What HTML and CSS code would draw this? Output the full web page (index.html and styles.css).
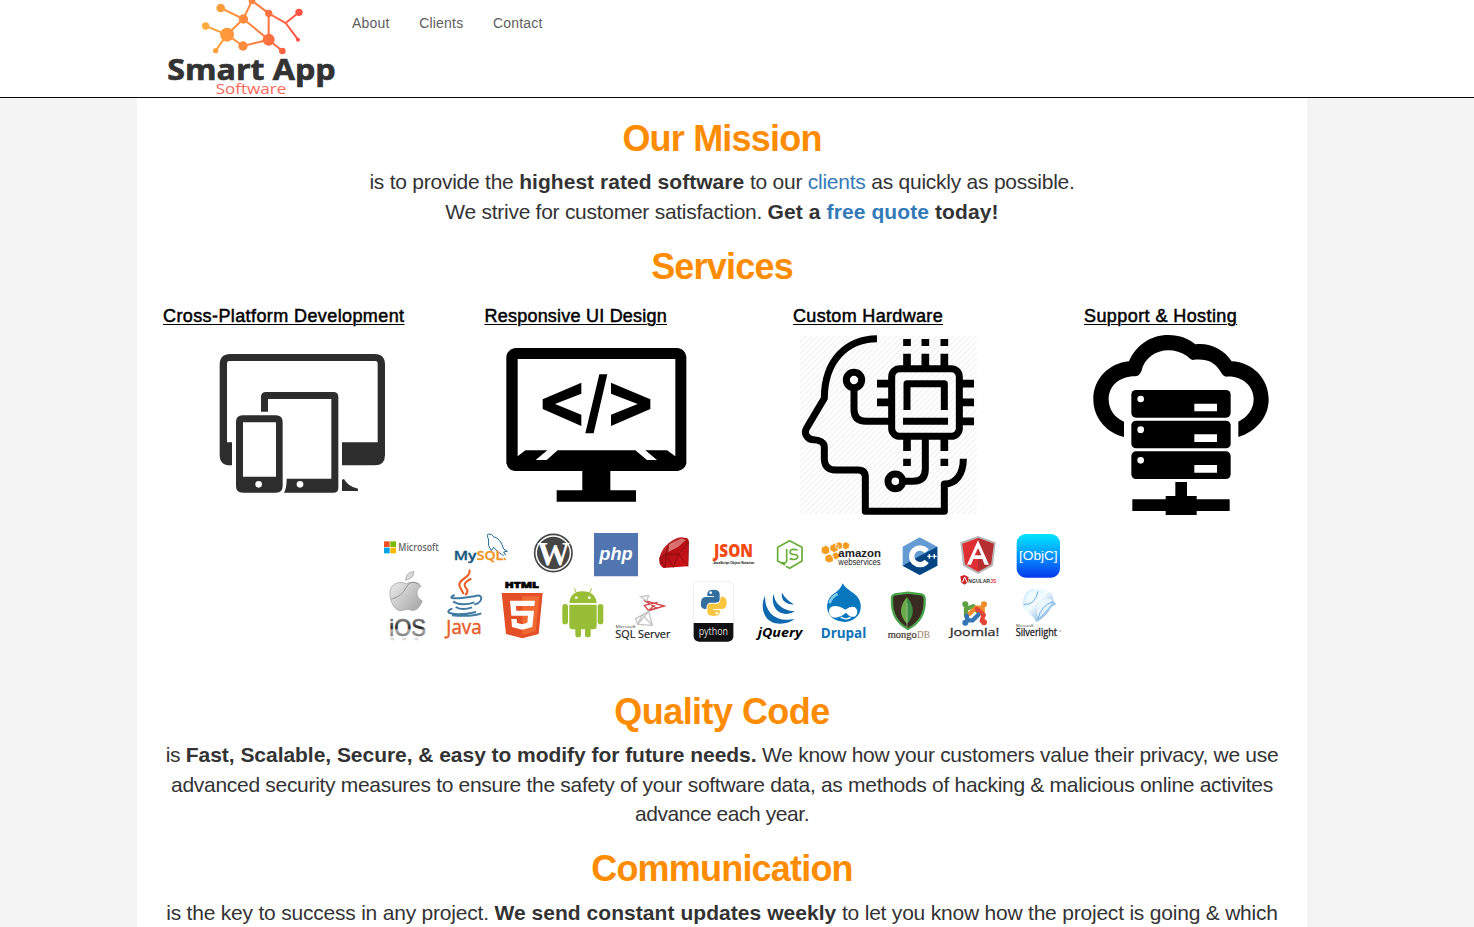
FILE: index.html
```html
<!DOCTYPE html>
<html lang="en">
<head>
<meta charset="utf-8">
<title>Smart App Software</title>
<link rel="stylesheet" href="styles.css">
</head>
<body>
<header class="navbar">
  <div class="navbar-inner">
    <svg class="brand" viewBox="105 0 525 291" role="img" aria-label="Smart App Software">
      <defs><linearGradient id="net" gradientUnits="userSpaceOnUse" x1="215" y1="0" x2="520" y2="0"><stop offset="0" stop-color="#ffae3b"/><stop offset=".5" stop-color="#ff823e"/><stop offset="1" stop-color="#ff4d46"/></linearGradient></defs>
      <g fill="none" stroke="url(#net)" stroke-width="6">
        <path d="M272 24L340 57L366 2L416 40L467 69L507 37M467 69L504 119M416 40V119L457 153M340 57L416 119L339 138L291 104L340 57M227 78L291 104L257 152"/>
      </g>
      <g fill="url(#net)"><circle cx="272" cy="24" r="13"/><circle cx="340" cy="57" r="14"/><circle cx="366" cy="2" r="10"/><circle cx="416" cy="40" r="11"/><circle cx="507" cy="37" r="11"/><circle cx="504" cy="119" r="6"/><circle cx="416" cy="119" r="18"/><circle cx="457" cy="153" r="10"/><circle cx="339" cy="138" r="14"/><circle cx="291" cy="104" r="21"/><circle cx="227" cy="78" r="11"/><circle cx="257" cy="152" r="8"/></g>
      <text class="brand-name" x="112" y="239" textLength="505" lengthAdjust="spacingAndGlyphs">Smart App</text>
      <text class="brand-sub" x="257" y="283" textLength="212" lengthAdjust="spacingAndGlyphs">Software</text>
    </svg>
    <nav class="links"><a>About</a><a>Clients</a><a>Contact</a></nav>
  </div>
</header>
<main class="container">
  <h1 class="title t-mission">Our Mission</h1>
  <p class="lead"><span class="l1">is to provide the <b>highest rated software</b> to our <a>clients</a> as quickly as possible.</span><br><span class="l2">We strive for customer satisfaction. <b>Get a <a>free quote</a> today!</b></span></p>
  <h1 class="title t-services">Services</h1>
  <section class="services">
    <div class="service"><h4 class="s1">Cross-Platform Development</h4>
      <svg class="pic" viewBox="69 90 690 570">
        <path fill="#2d2d2d" fill-rule="evenodd" d="M271 162H704Q735 162 735 194V465Q735 496 704 496H606V427H713V190Q713 183 706 183H268Q261 183 261 190V427H276V496H271Q239 496 239 465V194Q239 162 271 162Z"/>
        <path fill="#2d2d2d" d="M363 335V291Q363 276 378 276H580Q595 276 595 291V563Q595 578 580 578H432Q440 565 440 536H574V297H384V335Z"/>
        <path fill="#2d2d2d" fill-rule="evenodd" d="M308 346H408Q428 346 428 366V558Q428 578 408 578H308Q288 578 288 558V366Q288 346 308 346ZM309 367V530H408V367Z"/>
        <path fill="#2d2d2d" d="M606 539L612 537Q624 560 654 566V573H606Z"/><circle cx="356" cy="553" r="10" fill="#fff"/><circle cx="480" cy="553" r="10" fill="#fff"/>
      </svg></div>
    <div class="service"><h4 class="s2">Responsive UI Design</h4>
      <svg class="pic" viewBox="44 90 690 570">
        <path fill-rule="evenodd" d="M133 144H623Q644 148 648 169V490Q645 508 623 513H420V571H497V605H259V571H336V513H133Q113 510 108 490V169Q112 148 133 144ZM142 177V469L165 451H231L196 480H229L262 451H495L530 480H560L525 451H590L615 469V177Z"/>
        <path d="M333 248V281L254 312L333 344V378L217 327V298ZM422 248V281L502 312L422 344V378L540 327V298ZM387 223H411L370 400H345Z"/>
      </svg></div>
    <div class="service"><h4 class="s3">Custom Hardware</h4>
      <svg class="pic" viewBox="39 90 690 570">
        <defs><pattern id="hatch" width="17" height="17" patternUnits="userSpaceOnUse"><path d="M-2 19L19 -2" stroke="#e4e4e4" stroke-width="2.5"/></pattern></defs>
        <path fill="url(#hatch)" d="M60 108H590V642H60Z"/>
        <g fill="none" stroke="#000" stroke-width="21">
          <path d="M291 116C199 117 133 183 133 295L80 384C70 400 82 419 101 419C118 419 133 428 133 440V480Q136 510 166 510H234Q256 510 256 532V634H493V552C528 552 550 522 550 476" stroke-linejoin="round"/>
          <rect x="335" y="206" width="203" height="203" rx="24"/>
          <circle cx="222" cy="240" r="23"/><circle cx="346" cy="544" r="22"/>
          <path d="M222 264V328Q222 364 258 364H335M436 409V507Q436 544 399 544H370"/>
          <path d="M381 330V251H493V330" stroke-linejoin="round"/><path d="M369 364H504"/>
          <path d="M381 117V138M436 117V138M493 117V138M381 161V206M436 161V206M493 161V206M291 251H335M291 307H335M538 251H582M538 307H582M538 364H582M381 409V453M493 409V453M381 476V498M493 476V498" stroke-width="23"/>
        </g>
      </svg></div>
    <div class="service"><h4 class="s4">Support &amp; Hosting</h4>
      <svg class="pic" viewBox="42 90 690 570">
        <path d="M162 411C105 397 70 350 70 297C70 237 117 189 177 184C197 136 242 105 295 105C330 105 356 116 376 133C423 128 461 149 485 184C548 187 596 236 596 298C596 350 561 394 505 411V365C532 353 551 327 551 298C551 256 514 226 468 230Q458 228 451 214C433 185 408 175 368 180Q360 178 352 169C299 133 228 153 214 214Q208 229 195 229C148 229 116 258 116 298C116 329 135 354 162 365Z"/>
        <rect x="184" y="270" width="298" height="83" rx="14"/><rect x="184" y="362" width="298" height="83" rx="14"/><rect x="184" y="454" width="298" height="83" rx="14"/>
        <path d="M316 546H351V588H380V598H479V633H380V645H287V633H187V598H287V588H316Z"/>
        <g fill="#fff"><circle cx="212" cy="297" r="10"/><circle cx="212" cy="389" r="10"/><circle cx="212" cy="481" r="10"/><path d="M373 311H441V334H373ZM373 403H441V426H373ZM373 495H441V518H373Z"/></g>
      </svg></div>
  </section>
  <svg class="tech" viewBox="0 0 2100 375">
    <defs>
      <linearGradient id="obj" x2="0" y2="1"><stop stop-color="#00e6ff"/><stop offset=".5" stop-color="#0793fc"/><stop offset="1" stop-color="#0638ef"/></linearGradient>
      <linearGradient id="silver" x2="1" y2="1"><stop stop-color="#f8f8f8"/><stop offset="1" stop-color="#a2a2a2"/></linearGradient>
      <linearGradient id="ios" x2="0" y2="1"><stop offset=".1" stop-color="#999"/><stop offset=".52" stop-color="#222"/><stop offset=".6" stop-color="#aaa"/><stop offset="1" stop-color="#555"/></linearGradient>
      <linearGradient id="ruby" x2="1" y2="1"><stop stop-color="#e9625d"/><stop offset=".4" stop-color="#b10f14"/><stop offset="1" stop-color="#d5151a"/></linearGradient>
      <linearGradient id="glow" x2="1" y2="1"><stop stop-color="#bde6fb"/><stop offset=".4" stop-color="#f5fcff"/><stop offset="1" stop-color="#4b91d6"/></linearGradient>
    </defs>
    <g>
      <path fill="#f05022" d="M27 49h17v17H27z"/><path fill="#7eb900" d="M46 49h17v17H46z"/><path fill="#00a3ee" d="M27 68h17v17H27z"/><path fill="#fdb800" d="M46 68h17v17H46z"/>
      <text class="open semi" x="70" y="78" font-size="30" fill="#666" textLength="121" lengthAdjust="spacingAndGlyphs">Microsoft</text>
      <g fill="none" stroke="#1d6b91" stroke-width="3"><path d="M349 77Q336 62 341 45Q334 27 340 27Q350 26 357 36Q376 39 386 72L397 79L386 81L392 91M349 77L356 67Q367 82 386 92"/></g>
      <text class="open semi" x="236" y="104" font-size="36" fill="#15577f" stroke="#15577f" textLength="68" lengthAdjust="spacingAndGlyphs">My</text><text class="open semi" x="305" y="104" font-size="36" fill="#f29221" stroke="#f29221" textLength="91" lengthAdjust="spacingAndGlyphs">SQL.</text>
      <circle cx="535" cy="84" r="56" fill="#fff" stroke="#464646" stroke-width="5"/><circle cx="535" cy="84" r="49" fill="#464646"/>
      <text class="serif bold" x="487" y="120" font-size="100" fill="#fff" textLength="98" lengthAdjust="spacingAndGlyphs">W</text>
      <path fill="#5075b1" d="M657 24H789V154H657z"/>
      <text class="sans bold ital" x="673" y="105" font-size="54" fill="#fff" textLength="100" lengthAdjust="spacingAndGlyphs">php</text>
      <path fill="url(#silver)" stroke="#999" stroke-width="2" d="M94 176C79 169 54 170 46 195C40 221 57 256 76 257C86 257 93 251 102 253C112 258 120 258 129 249Q138 240 142 228C122 219 121 193 138 184C127 169 109 170 94 176ZM92 166Q91 144 116 139Q120 158 92 166Z"/><path d="M49 222Q80 215 93 188T134 178" fill="none" stroke="#777" stroke-width="2"/>
      <text class="sans" x="43" y="333" font-size="72" fill="url(#ios)" stroke="url(#ios)" stroke-width="2" textLength="110" lengthAdjust="spacingAndGlyphs">iOS</text><path d="M46 342H150" stroke="#ddd" stroke-width="7" stroke-dasharray="12 24"/>
      <g fill="none" stroke-width="6"><g stroke="#ea5a1c"><path d="M283 134C292 159 240 163 256 188L266 207M289 161C264 174 265 181 277 194Q279 203 271 210" /></g><g stroke="#427ba0"><path d="M239 210C216 220 230 225 304 213M234 230Q261 245 298 232M242 246Q262 258 291 247M299 214C324 204 327 230 298 239M232 251C200 262 235 276 303 261M231 271Q290 276 319 265"/></g></g>
      <text class="open" x="214" y="328" font-size="60" fill="#e7602b" stroke="#e7602b" stroke-width="1.5" textLength="106" lengthAdjust="spacingAndGlyphs">Java</text>
      <text class="open heavy" x="389" y="189" font-size="28" stroke="#000" stroke-width="2" textLength="103" lengthAdjust="spacingAndGlyphs">HTML</text>
      <path fill="#e44f27" d="M380 204H503L491 327L442 340L393 327Z"/><path fill="#f16a31" d="M442 214H493L482 319L442 330Z"/><path fill="#fff" d="M405 227H480L478 243H423L424 257H477L472 306L442 314L411 306L409 282H425L426 294L442 298L457 293L459 272H409Z"/>
      <g fill="#98be35"><path d="M583 234Q587 199 622 199Q661 199 665 234ZM583 239H665V303Q665 313 655 313H593Q583 313 583 303Z"/><rect x="562" y="237" width="17" height="61" rx="8"/><rect x="668" y="237" width="17" height="61" rx="8"/><rect x="601" y="291" width="17" height="46" rx="8"/><rect x="630" y="291" width="17" height="46" rx="8"/></g><path d="M606 208L598 190M642 208L650 190" stroke="#98be35" stroke-width="3"/><circle cx="604" cy="218" r="4" fill="#fff"/><circle cx="643" cy="218" r="4" fill="#fff"/>
    </g>
    <g transform="translate(690)">
      <path fill="url(#ruby)" d="M163 99Q170 70 191 55Q210 38 229 37L245 39Q254 42 251 60L249 124L175 129Q160 120 163 99Z"/><path fill="none" stroke="#7c0c0e" stroke-width="2" d="M191 55L183 88L163 99L180 127L183 88L221 87L249 124L251 51L221 87L205 127L183 88M191 55L248 49"/><path fill="#f2b0aa" d="M193 57L230 40L243 45L220 65L190 81Z" opacity=".6"/>
      <text class="open heavy" x="327" y="95" font-size="51" fill="#f34a12" textLength="117" lengthAdjust="spacingAndGlyphs">JSON</text>
      <text class="sans bold" x="324" y="118" font-size="12" textLength="124" lengthAdjust="spacingAndGlyphs">JavaScript Object Notation</text>
      <path fill="none" stroke="#68ae38" stroke-width="5" stroke-linejoin="round" d="M540 120L518 108V67L554 47L591 67V108L554 130L543 124M545 72V107Q545 117 530 112"/><path d="M578 75Q558 69 555 80C552 94 582 83 578 98Q573 107 554 101" fill="none" stroke="#68ae38" stroke-width="5"/>
      <g fill="#f49b21" stroke="#fff" stroke-width="2"><path d="M649 68l13-7 12 7v15l-12 6-13-6zM675 62l13-7 12 7v14l-12 7-13-7zM660 94l13-7 12 7v14l-12 6-13-6zM682 86l10-5 11 5v12l-11 6-10-6zM692 56l10-6 11 6v12l-11 6-10-6zM712 56l10-6 11 6v12l-11 6-10-6z"/></g>
      <g fill="none" stroke="#d34448" stroke-width="4"><path d="M117 226L178 243L131 257L118 241L155 233L131 257L154 249L117 226Z"/><path stroke="#c4c4c4" d="M107 215L131 212L125 228ZM131 259L92 281L98 298L142 301L131 259L98 298L112 269L142 301"/></g>
      <text class="open" x="32" y="310" font-size="13" fill="#333" textLength="60" lengthAdjust="spacingAndGlyphs">Microsoft</text><text class="open" x="31" y="340" font-size="34" fill="#222" stroke="#222" stroke-width=".7" textLength="165" lengthAdjust="spacingAndGlyphs">SQL Server</text>
      <rect x="265" y="169" width="121" height="180" rx="17" fill="#fff" stroke="#eee" stroke-width="3"/><path d="M266 294H385V334Q385 348 369 350H282Q266 348 266 334Z" fill="#111"/>
      <path fill="#336f9e" d="M307 213V204Q309 194 325 194Q344 194 344 207V223Q344 233 332 233H314Q304 236 304 252H298Q285 250 288 231Q289 216 303 216H327V213Z"/><path fill="#fac63f" d="M344 255V264Q342 273 325 273Q307 271 307 260V245Q307 236 319 236H337Q347 233 347 215H354Q365 217 365 236Q364 252 349 252H325V255Z"/><circle cx="317" cy="203" r="4" fill="#fff"/><circle cx="335" cy="264" r="4" fill="#fff"/>
      <text class="open" x="281" y="330" font-size="32" fill="#ddd" textLength="88" lengthAdjust="spacingAndGlyphs">python</text>
      <g fill="#1068ae"><path d="M480 213C465 242 474 284 507 294Q545 301 569 282Q522 291 498 266Q479 247 480 213ZM506 206C498 231 509 258 529 264Q552 272 569 259Q537 257 521 239Q508 227 506 206ZM531 203C527 225 541 239 567 238Q541 223 531 203Z"/></g>
      <text class="open bold ital" x="458" y="336" font-size="38" textLength="134" lengthAdjust="spacingAndGlyphs">jQuery</text>
    </g>
    <g transform="translate(1380)">
      <text class="sans bold" x="10" y="97" font-size="34" fill="#222" textLength="128" lengthAdjust="spacingAndGlyphs">amazon</text><text class="sans" x="10" y="119" font-size="25" fill="#222" textLength="127" lengthAdjust="spacingAndGlyphs">webservices</text>
      <path fill="#659bd3" d="M254 37L307 65V122L254 150L203 122V65Z"/><path fill="#004482" d="M254 93L307 65V122L254 150L203 122Z"/><path fill="none" stroke="#fff" stroke-width="16" d="M275 79A25 25 0 1 0 275 109"/><path d="M277 94h13m-7-7v14M292 94h13m-7-7v14" stroke="#fff" stroke-width="4"/>
      <path fill="#b6b6b6" d="M429 33L482 52L474 122L429 147L384 122L376 52Z"/><path fill="#df2e31" d="M429 39L476 56L468 118L429 140L390 118L382 56Z"/><path fill="#b52e31" d="M429 39L476 56L468 118L429 140Z"/><path fill="#fff" fill-rule="evenodd" d="M429 46L462 119H449L442 102H415L408 119H396ZM429 69L419 91H439Z"/>
      <path fill="#c9252b" d="M376 154L389 150L401 157L398 172L389 179L379 173Z"/><path d="M382 172L389 156L396 172" fill="none" stroke="#fff" stroke-width="3"/><text class="sans bold" x="400" y="173" font-size="16" fill="#333" textLength="65" lengthAdjust="spacingAndGlyphs">NGULAR</text><text class="sans bold" x="466" y="173" font-size="16" fill="#d33" textLength="18" lengthAdjust="spacingAndGlyphs">JS</text>
      <rect x="545" y="27" width="130" height="131" rx="27" fill="url(#obj)"/><text class="sans" x="552" y="106" font-size="41" fill="#fff" textLength="116" lengthAdjust="spacingAndGlyphs">[ObjC]</text>
      <path fill="#0877bd" d="M23 175Q30 189 58 206C84 226 83 263 61 279Q33 301 -2 283C-28 267 -31 231 -9 210Q18 194 23 175Z"/><path fill="#fff" d="M-18 263Q-20 243 0 243Q15 243 31 254Q46 242 59 246Q75 258 61 274Q47 280 33 263Q17 277 0 278Q-14 276 -18 263Z"/><path d="M17 276Q31 287 47 277" fill="none" stroke="#fff" stroke-width="4"/><path d="M-16 235Q-12 216 8 207" fill="none" stroke="#82c9ed" stroke-width="8"/>
      <text class="open bold" x="-43" y="338" font-size="40" fill="#0e73b8" textLength="137" lengthAdjust="spacingAndGlyphs">Drupal</text>
      <path fill="#3a2b20" stroke="#4aa34b" stroke-width="7" d="M219 203L259 208Q270 211 269 224Q272 285 219 312Q168 285 171 224Q169 211 180 208Z"/><path fill="#6bac4a" d="M216 216Q180 260 216 296Z"/><path fill="#3d8e43" d="M216 216Q251 260 216 296Z"/><path d="M216 235V306" stroke="#bdcfac" stroke-width="2"/>
      <text class="serif" x="158" y="338" font-size="31" fill="#49392f" stroke="#49392f" stroke-width=".7" textLength="87" lengthAdjust="spacingAndGlyphs">mongo</text><text class="serif" x="246" y="338" font-size="31" fill="#9b7e62" textLength="39" lengthAdjust="spacingAndGlyphs">DB</text>
      <g fill="none" stroke-width="13" stroke-linecap="round"><path stroke="#5fa043" d="M393 272V252L415 244L430 261"/><path stroke="#f18a2a" d="M443 270V248H423L403 267"/><path stroke="#e44537" d="M440 288L446 270L425 252"/><path stroke="#3476b5" d="M395 272L397 286H413L430 269"/></g><circle cx="391" cy="238" r="9" fill="#5fa043"/><circle cx="447" cy="238" r="9" fill="#f18a2a"/><circle cx="447" cy="292" r="9" fill="#e44537"/><circle cx="391" cy="293" r="9" fill="#3476b5"/>
      <text class="open" x="344" y="333" font-size="31" fill="#333" stroke="#333" textLength="149" lengthAdjust="spacingAndGlyphs">Joomla!</text>
      <path fill="url(#glow)" d="M571 207Q584 189 605 194Q635 188 651 206L656 228L664 237L650 246Q630 279 604 291Q595 273 580 264Q556 247 564 224Z"/><path fill="#eefaff" opacity=".85" d="M577 208Q588 192 607 198Q611 216 599 231Q582 242 568 235ZM610 234Q629 214 653 225Q647 247 609 281Q603 255 610 234Z"/><path d="M566 238Q600 242 609 199M609 282Q618 241 655 229" stroke="#6faddf" stroke-width="3" fill="none"/>
      <text class="open" x="543" y="306" font-size="13" fill="#333" textLength="53" lengthAdjust="spacingAndGlyphs">Microsoft</text><text class="open" x="542" y="334" font-size="33" fill="#222" stroke="#222" textLength="124" lengthAdjust="spacingAndGlyphs">Silverlight</text><path d="M673 318h6" stroke="#555" stroke-width="2"/>
    </g>
  </svg>
  <h1 class="title t-quality">Quality Code</h1>
  <p class="lead"><span class="l3">is <b>Fast, Scalable, Secure, &amp; easy to modify for future needs.</b> We know how your customers value their privacy, we use</span><br><span class="l4">advanced security measures to ensure the safety of your software data, as methods of hacking &amp; malicious online activites</span><br><span class="l5">advance each year.</span></p>
  <h1 class="title t-comm">Communication</h1>
  <p class="lead last"><span class="l6">is the key to success in any project. <b>We send constant updates weekly</b> to let you know how the project is going &amp; which</span></p>
</main>
</body>
</html>
```
FILE: styles.css
```css
* { box-sizing: border-box; }
html, body { margin: 0; height: 100%; overflow: hidden; }
body { background: #f4f4f4; color: #333; font-family: "Liberation Sans", Arial, sans-serif; }
.navbar { height: 98px; background: #fff; border-bottom: 1px solid #080808; }
.navbar-inner { width: 1170px; margin-left: 137px; padding-left: 28px; display: flex; }
.brand { width: 175px; height: 97px; flex: none; }
.brand-name { font: 700 84px "Open Sans", sans-serif; fill: #333; stroke: #333; stroke-width: 2; }
.brand-sub { font: 400 46px "Open Sans", sans-serif; fill: #ff665b; }
.links { display: flex; gap: 29.6px; padding: 13px 0 0 12px; font-size: 14px; line-height: 20px; color: #5e5e5e; letter-spacing: .2px; }
.container { width: 1170px; height: 829px; margin-left: 137px; padding: 21px 15px 0; background: #fff; overflow: hidden; }
.title { margin: 0; height: 48px; font-size: 36px; line-height: 39px; font-weight: 700; color: #ff8c00; text-align: center; white-space: nowrap; letter-spacing: -0.8px; }
.lead { margin: 0; font-size: 21px; line-height: 29.5px; text-align: center; white-space: nowrap; }
.lead a { color: #337ab7; }
.lead b { letter-spacing: .05px; }
.l1 { letter-spacing: -.24px; }
.l2 { letter-spacing: -.27px; }
.l2 b { letter-spacing: .1px; }
.l3 { letter-spacing: -.28px; }
.l3 b { letter-spacing: -.04px; }
.l4 { letter-spacing: -.3px; }
.l5 { letter-spacing: -.45px; }
.l6 { letter-spacing: -.21px; }
.t-services { margin-top: 21px; }
.services { display: grid; grid-template-columns: 321.5px 308.5px 291px 230px; width: 1140px; padding-left: 11px; padding-top: 11px; }
.service h4 { margin: 0; height: 24px; font-size: 18px; line-height: 20px; font-weight: 400; color: #000; -webkit-text-stroke: .5px #000; text-decoration: underline; text-decoration-thickness: 1px; text-underline-offset: 2px; white-space: nowrap; }
.service .s1 { letter-spacing: .4px; }
.service .s2 { letter-spacing: .22px; }
.service .s3 { letter-spacing: .33px; }
.service .s4 { letter-spacing: .42px; }
.pic { display: block; width: 230px; height: 190px; }
.tech { display: block; width: 700px; height: 125px; margin: 5px 0 0 223px; }
.tech .open { font-family: "Open Sans", sans-serif; }
.tech .sans { font-family: "Liberation Sans", sans-serif; }
.tech .serif { font-family: "Liberation Serif", serif; }
.tech .semi { font-weight: 600; }
.tech .bold { font-weight: 700; }
.tech .heavy { font-weight: 800; }
.tech .ital { font-style: italic; }
.t-quality { margin-top: 42px; letter-spacing: -.55px; }
.t-comm { margin-top: 20px; }
.last { padding-top: 1px; }
```
